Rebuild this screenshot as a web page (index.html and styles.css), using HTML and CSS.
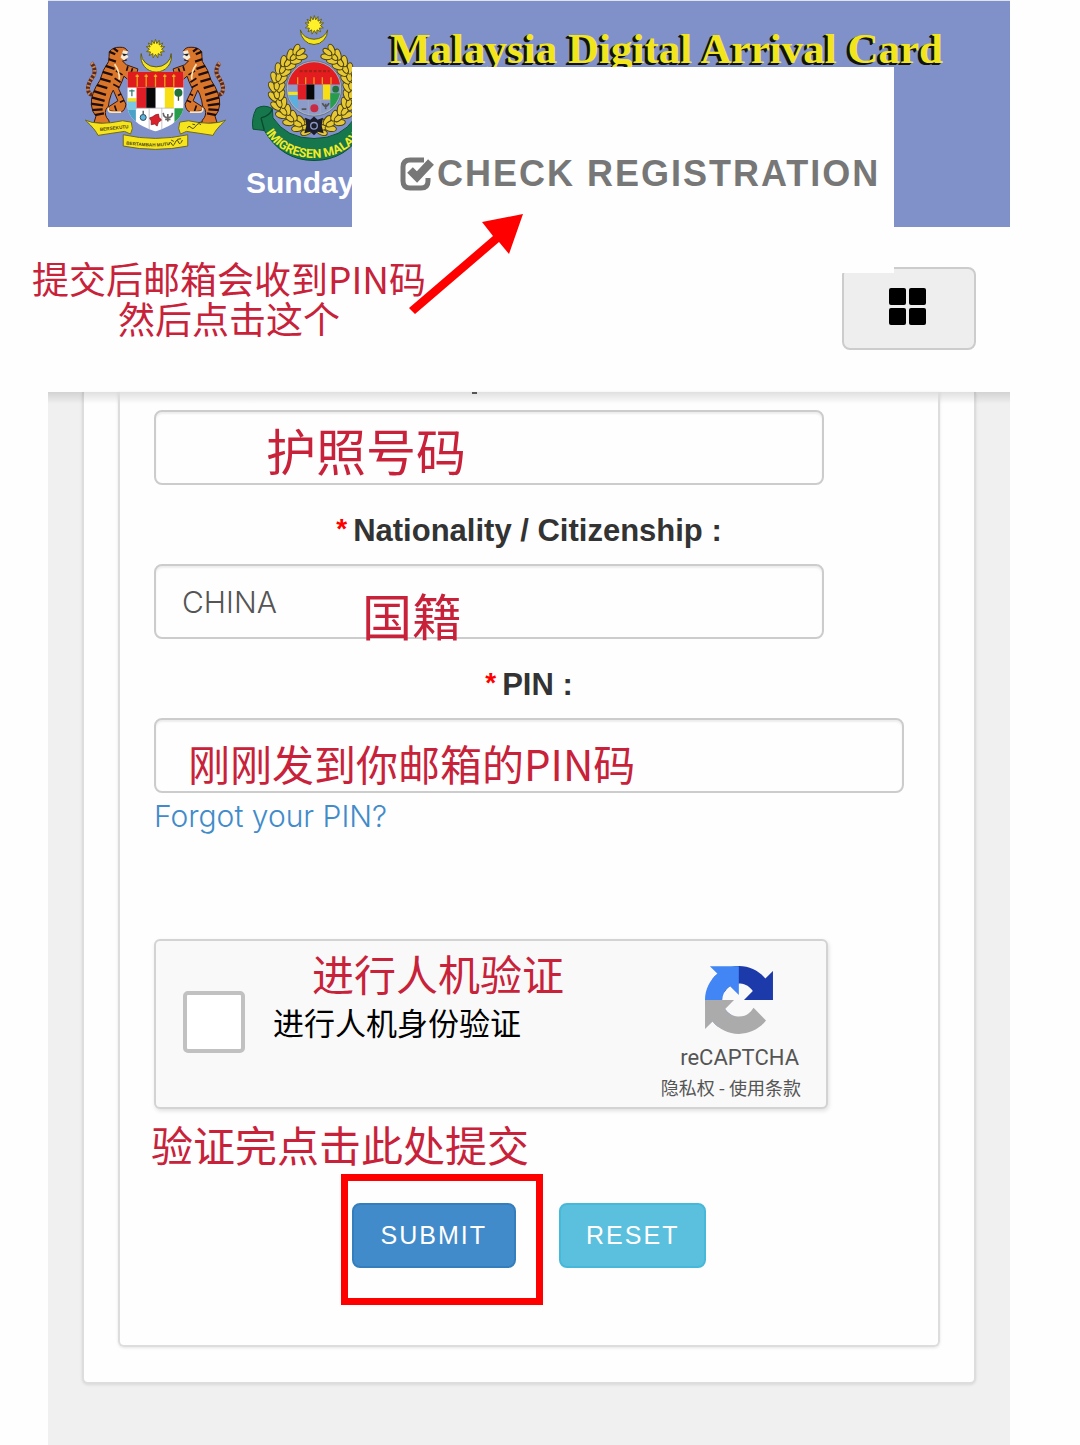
FILE: index.html
```html
<!DOCTYPE html>
<html lang="zh-CN">

<head>
    <meta charset="UTF-8">
    <meta name="viewport" content="width=device-width, initial-scale=1.0">
    <title>Malaysia Digital Arrival Card</title>
    <link rel="stylesheet" href="styles.css">
</head>

<body>
    <div class="page">
        <!-- Banner -->
        <header class="banner">
            <div class="banner-top">
                <svg class="coat-of-arms" viewBox="130 106 430 344" aria-label="Coat of arms">
                    <defs>
                        <path id="tiger-body" d="M262 152 Q256 138 238 139 Q218 138 206 152 Q206 166 204 182 Q186 206 178 238 Q150 278 152 312 Q154 334 166 346 L160 366 L208 370 L204 358 Q190 344 196 326 Q206 318 206 300 Q212 276 218 268 L232 300 L204 318 L206 330 L240 334 Q254 330 256 310 L234 264 Q246 240 250 226 L262 236 L264 214 L290 214 L292 204 L258 192 Q250 186 246 180 L258 178 L250 166 Z"/>
                        <clipPath id="tiger-clip"><use href="#tiger-body"/></clipPath>
                        <g id="tiger">
                            <path d="M152 186 Q166 202 160 222 Q140 250 142 266 Q144 284 158 280" fill="none" stroke="#5b2a1c" stroke-width="12"/>
                            <path d="M152 186 Q166 202 160 222 Q140 250 142 266 Q144 284 158 280" fill="none" stroke="#c98a5b" stroke-width="11" stroke-dasharray="5 7"/>
                            <use href="#tiger-body" fill="#d9762c" stroke="#3a1708" stroke-width="3"/>
                            <g clip-path="url(#tiger-clip)" fill="none" stroke="#1d0d07" stroke-width="7">
                                <path d="M200 150 L224 160 M214 138 L232 152 M196 172 L226 182 M186 192 L222 204 M176 210 L216 222 M168 230 L210 242 M160 250 L200 262 M150 268 L196 282 M146 288 L192 300 M146 308 L188 314 M150 328 L186 326 M158 344 L190 338"/>
                                <path d="M226 210 L246 222 M222 232 L240 244 M218 250 L236 260 M232 284 L248 276 M238 304 L256 296 M222 314 L228 332 M262 196 L258 210 M276 202 L272 214" stroke-width="5"/>
                            </g>
                            <path d="M248 148 L264 152 L258 160 L264 168 L250 178 L240 170 Z" fill="#f6ead8"/>
                            <path d="M244 158 L262 160 L250 166 Z" fill="#222"/>
                            <path d="M204 320 Q200 334 214 334 L242 334 M222 190 Q238 212 236 236" fill="none" stroke="#ffe3b5" stroke-width="5"/>
                        </g>
                        <polygon id="sun" points="0,-29 4,-16 11,-26 11,-12 22,-18 16,-6 28,-7 18,1 27,8 15,9 19,20 8,14 7,27 0,16 -7,27 -8,14 -19,20 -15,9 -27,8 -18,1 -28,-7 -16,-6 -22,-18 -11,-12 -11,-26 -4,-16"/>
                    </defs>
                    <use href="#tiger"/>
                    <use href="#tiger" transform="translate(690 0) scale(-1 1)"/>
                    <path d="M302 158 A46 46 0 1 0 392 158 A45 40 0 0 1 302 158 Z" fill="#f6e51d" stroke="#5c5a1a" stroke-width="3"/>
                    <use href="#sun" transform="translate(345 144)" fill="#fff02a" stroke="#6b6412" stroke-width="3"/>
                    <clipPath id="shield"><path d="M260 212 H430 V312 Q430 366 345 392 Q260 366 260 312 Z"/></clipPath>
                    <g clip-path="url(#shield)">
                        <rect x="260" y="212" width="170" height="182" fill="#fff"/>
                        <rect x="260" y="212" width="170" height="48" fill="#e01b1b"/>
                        <rect x="260" y="300" width="28" height="26" fill="#7cc7e6"/>
                        <rect x="260" y="292" width="28" height="10" fill="#f4e01c"/>
                        <path d="M274 266 V286 M266 270 H282" stroke="#397c74" stroke-width="4"/>
                        <rect x="288" y="260" width="29" height="62" fill="#df1d27"/>
                        <rect x="317" y="260" width="28" height="62" fill="#080808"/>
                        <rect x="373" y="260" width="27" height="62" fill="#f7df13"/>
                        <path d="M414 276 V300" stroke="#4d4c24" stroke-width="4"/>
                        <circle cx="414" cy="276" r="12" fill="#22713b"/>
                        <path d="M260 326 H286 V390 H260 Z" fill="#4ba2c7"/>
                        <path d="M402 322 H430 V390 H402 Z" fill="#279d4c"/>
                        <path d="M308 330 V340" stroke="#455" stroke-width="4"/>
                        <circle cx="308" cy="350" r="9" fill="#5fb3dc" stroke="#27495e" stroke-width="3"/>
                        <path d="M345 342 L354 340 L356 350 L364 358 L354 364 L350 376 L342 370 L332 372 L332 360 L326 352 L336 348 Z" fill="#d9222c" stroke="#7f1118" stroke-width="2"/>
                        <path d="M368 336 Q370 352 382 350 Q394 352 396 336 M382 340 V362 M374 356 H390" fill="none" stroke="#666" stroke-width="5"/>
                        <path d="M288 322 H400 M326 322 V392 M364 322 V392" stroke="#a9a9b0" stroke-width="2"/>
                        <path d="M290 220 V258 M317 220 V258 M345 220 V258 M373 220 V258 M400 220 V258" stroke="#e9a31c" stroke-width="4"/>
                        <path d="M285 226 h10 M312 226 h10 M340 226 h10 M368 226 h10 M395 226 h10" stroke="#f4c22a" stroke-width="4"/>
                    </g>
                    <g fill="#f6e51d" stroke="#6e681b" stroke-width="3">
                        <path d="M134 358 Q170 376 246 360 L272 364 Q280 384 270 400 L252 392 Q210 398 172 404 Q166 388 134 358 Z"/>
                        <path d="M556 358 Q520 376 444 360 L418 364 Q410 384 420 400 L438 392 Q480 398 518 404 Q524 388 556 358 Z"/>
                        <path d="M248 402 Q345 424 442 402 L442 436 Q345 456 248 436 Z"/>
                    </g>
                    <path id="motto" d="M256 431 Q330 442 384 434" fill="none"/>
                    <text class="motto"><textPath href="#motto">BERTAMBAH MUTU</textPath></text>
                    <text class="motto" x="178" y="391" transform="rotate(-6 178 391)">BERSEKUTU</text>
                    <path d="M384 432 q6 -12 10 -2 t10 -4 t10 -2 t12 -6 M392 418 l8 4 M410 416 l12 -2 M440 382 q6 -10 12 -2 t14 -4 t16 -4 M456 370 l8 2 M474 366 l14 -4" fill="none" stroke="#4d4510" stroke-width="3"/>
                </svg>
                <svg class="immigration-badge" viewBox="634 36 378 446" aria-label="Imigresen Malaysia">
                    <defs>
                        <g id="leaf">
                            <ellipse cx="-13" cy="0" rx="9" ry="17" transform="rotate(-32 -13 0)"/>
                            <ellipse cx="13" cy="0" rx="9" ry="17" transform="rotate(32 13 0)"/>
                            <ellipse cx="0" cy="-6" rx="8" ry="15"/>
                        </g>
                        <g id="wreath" fill="#e6c935" stroke="#493f0c" stroke-width="3">
                            <use href="#leaf" transform="translate(802 380) rotate(-78)"/>
                            <use href="#leaf" transform="translate(778 370) rotate(-66)"/>
                            <use href="#leaf" transform="translate(754 354) rotate(-52)"/>
                            <use href="#leaf" transform="translate(734 334) rotate(-38)"/>
                            <use href="#leaf" transform="translate(720 310) rotate(-22)"/>
                            <use href="#leaf" transform="translate(712 284) rotate(-10)"/>
                            <use href="#leaf" transform="translate(711 258) rotate(2)"/>
                            <use href="#leaf" transform="translate(716 232) rotate(14)"/>
                            <use href="#leaf" transform="translate(727 208) rotate(28)"/>
                            <use href="#leaf" transform="translate(742 188) rotate(38)"/>
                            <use href="#leaf" transform="translate(760 170) rotate(48)"/>
                            <use href="#leaf" transform="translate(778 156) rotate(54)"/>
                        </g>
                    </defs>
                    <path d="M782 86 A41 44 0 1 0 864 86 A42 36 0 0 1 782 86 Z" fill="#f6e51d" stroke="#5c5a1a" stroke-width="3"/>
                    <use href="#sun" transform="translate(824 72)" fill="#fff02a" stroke="#6b6412" stroke-width="3"/>
                    <path d="M650 322 Q672 308 698 322 L700 350 Q740 412 823 412 Q906 412 946 350 L948 322 Q974 308 996 322 L1006 384 L972 388 Q920 478 823 478 Q726 478 674 388 L640 384 Q634 352 650 322 Z" fill="#16764c" stroke="#0b5233" stroke-width="3"/>
                    <path d="M698 324 Q690 344 664 350 M664 350 L674 388" fill="none" stroke="#0a4a2e" stroke-width="4"/>
                    <use href="#wreath"/>
                    <use href="#wreath" transform="translate(1646 0) scale(-1 1)"/>
                    <clipPath id="badge"><circle cx="823" cy="262" r="79"/></clipPath>
                    <circle cx="823" cy="262" r="83" fill="#a9b4bd" stroke="#55606c" stroke-width="2"/>
                    <g clip-path="url(#badge)">
                        <rect x="740" y="180" width="166" height="166" fill="#8c9cca"/>
                        <rect x="740" y="180" width="166" height="70" fill="#e51c1f"/>
                        <path d="M780 210 H870" stroke="#a22316" stroke-width="7" stroke-dasharray="9 5"/>
                        <path d="M774 228 V250 M798 228 V250 M823 228 V250 M848 228 V250 M874 228 V250" stroke="#eb9b20" stroke-width="4"/>
                        <rect x="774" y="250" width="26" height="46" fill="#df1d27"/>
                        <rect x="800" y="250" width="24" height="46" fill="#080808"/>
                        <rect x="850" y="250" width="22" height="46" fill="#f7df13"/>
                        <rect x="740" y="272" width="34" height="10" fill="#f4e01c"/>
                        <rect x="740" y="282" width="34" height="60" fill="#57b0df"/>
                        <rect x="872" y="276" width="34" height="70" fill="#279d4c"/>
                        <circle cx="888" cy="264" r="10" fill="#22713b"/>
                        <circle cx="824" cy="321" r="12" fill="#c92b43"/>
                        <path d="M786 324 H800 M848 306 Q858 326 868 306 M858 308 V324" fill="none" stroke="#555" stroke-width="5"/>
                        <path d="M774 296 H872 M806 296 V346 M842 296 V346" stroke="#a9a9b0" stroke-width="2"/>
                    </g>
                    <path d="M796 350 L812 356 L823 346 L834 356 L850 350 L846 374 L852 396 L834 392 L823 402 L812 392 L794 396 L800 374 Z" fill="#1b1c2a"/>
                    <circle cx="823" cy="374" r="10" fill="none" stroke="#8b96c2" stroke-width="4"/>
                    <path id="ribbon" d="M678 394 Q728 470 823 470 Q920 470 974 386" fill="none"/>
                    <text class="ribbon-text"><textPath href="#ribbon">IMIGRESEN MALAYSIA</textPath></text>
                </svg>
                <h1>Malaysia Digital Arrival Card</h1>
            </div>
            <p class="date">Sunday</p>
        </header>

        <!-- Navigation -->
        <nav class="navbar">
            <button type="button" class="menu-button" aria-label="Menu">
                <svg viewBox="0 0 38 38">
                    <rect x="0" y="0" width="17" height="17" rx="2"/>
                    <rect x="20" y="0" width="17" height="17" rx="2"/>
                    <rect x="0" y="20" width="17" height="17" rx="2"/>
                    <rect x="20" y="20" width="17" height="17" rx="2"/>
                </svg>
            </button>
        </nav>

        <!-- Check registration box lies over the banner -->
        <div class="check-box">
            <a href="#">
                <svg viewBox="0 0 38 36">
                    <path d="M25 4 H11 Q4 4 4 11 V25 Q4 32 11 32 H22 Q29 32 29 25 V22" fill="none" stroke="#777" stroke-width="5"/>
                    <path d="M11 14 L18 21 L32 6" fill="none" stroke="#777" stroke-width="8"/>
                </svg>CHECK REGISTRATION</a>
        </div>
        <p class="note note-check">提交后邮箱会收到PIN码<br>然后点击这个</p>
        <svg class="arrow" viewBox="0 0 114 101">
            <polygon points="114,0 100,40 90,28 6,100 0,94 84,22 73,8"/>
        </svg>

        <!-- Registration form -->
        <main class="content">
            <div class="panel">
                <form class="form">
                    <div class="field">
                        <input type="text" class="control" aria-label="Passport">
                        <span class="note note-passport">护照号码</span>
                    </div>

                    <label for="nationality"><span class="required">*</span>Nationality / Citizenship :</label>
                    <div class="field">
                        <select id="nationality" class="control">
                            <option>CHINA</option>
                        </select>
                        <span class="note note-nationality">国籍</span>
                    </div>

                    <label for="pin"><span class="required">*</span>PIN :</label>
                    <div class="field">
                        <input type="text" id="pin" class="control control-full">
                        <span class="note note-pin">刚刚发到你邮箱的PIN码</span>
                    </div>
                    <a href="#" class="forgot">Forgot your PIN?</a>

                    <div class="captcha">
                        <input type="checkbox" id="robot">
                        <label for="robot">进行人机身份验证</label>
                        <div class="captcha-brand">
                            <svg viewBox="0 0 64 64">
                                <path d="M64 31.955l-.033-1.37V4.687l-7.16 7.16C50.948 4.674 42.033.093 32.05.093c-10.4 0-19.622 4.96-25.458 12.64l11.736 11.86a15.55 15.55 0 0 1 4.754-5.334c2.05-1.6 4.952-2.906 8.968-2.906.485 0 .86.057 1.135.163 4.976.393 9.288 3.14 11.828 7.124l-8.307 8.307L64 31.953" fill="#1c3aa9"/>
                                <path d="M31.862.094l-1.37.033H4.594l7.16 7.16C4.58 13.147 0 22.06 0 32.046c0 10.4 4.96 19.622 12.64 25.458L24.5 45.768a15.55 15.55 0 0 1-5.334-4.754c-1.6-2.05-2.906-4.952-2.906-8.968 0-.485.057-.86.163-1.135.393-4.976 3.14-9.288 7.124-11.828l8.307 8.307L31.86.095" fill="#4285f4"/>
                                <path d="M.001 32.045l.033 1.37v25.898l7.16-7.16c5.86 7.173 14.774 11.754 24.76 11.754 10.4 0 19.622-4.96 25.458-12.64l-11.736-11.86a15.55 15.55 0 0 1-4.754 5.334c-2.05 1.6-4.952 2.906-8.968 2.906-.485 0-.86-.057-1.135-.163-4.976-.393-9.288-3.14-11.828-7.124l8.307-8.307c-10.522.04-22.4.066-27.295-.005" fill="#ababab"/>
                            </svg>
                            <span class="captcha-name">reCAPTCHA</span>
                            <span class="captcha-links"><a href="#">隐私权</a> - <a href="#">使用条款</a></span>
                        </div>
                        <span class="note note-captcha">进行人机验证</span>
                    </div>

                    <p class="note-submit">验证完点击此处提交</p>

                    <div class="buttons">
                        <div class="highlight">
                            <button type="submit" class="btn btn-primary">SUBMIT</button>
                        </div>
                        <button type="reset" class="btn btn-info">RESET</button>
                    </div>
                </form>
            </div>
        </main>
    </div>
</body>

</html>
```

FILE: styles.css
```css
/* Base Styles */
* {
    box-sizing: border-box;
}

body {
    margin: 0;
    background-color: #fefefe;
    font-family: "Liberation Sans", "Noto Sans CJK SC", sans-serif;
    color: #333;
}

h1, p {
    margin: 0;
}

.page {
    position: relative;
    display: flex;
    flex-direction: column;
    min-height: 100vh;
    margin: 0 70px 0 48px;
}

/* Banner */
.banner {
    padding: 12px 0 23px 36px;
    border-top: 1px solid #dfe3f2;
    background-color: #8091ca;
}

.banner-top {
    display: flex;
    align-items: flex-start;
}

.banner svg {
    flex: none;
}

.coat-of-arms {
    width: 143px;
    height: 115px;
    margin: 23px 24px 0 0;
}

.immigration-badge {
    width: 126px;
    height: 149px;
    margin-right: 13px;
}

.motto {
    font: bold 14px "Liberation Sans", sans-serif;
    fill: #4d4510;
}

.ribbon-text {
    font: bold 37px Roboto, sans-serif;
    fill: #f3ec25;
}

.banner h1 {
    padding-top: 12px;
    font: bold 43px/48px "Liberation Serif", serif;
    color: #f3e51c;
    text-shadow: -2px 1px 0 #111, -3px 2px 0 #111;
    white-space: nowrap;
}

.date {
    padding-left: 162px;
    font-size: 30px;
    font-weight: bold;
    line-height: 42px;
    color: white;
}

/* Navigation */
.navbar {
    position: relative;
    display: flex;
    justify-content: flex-end;
    padding: 40px 34px 42px;
}

.navbar::after {
    content: '';
    position: absolute;
    top: 100%;
    left: 0;
    width: 100%;
    height: 12px;
    background: linear-gradient(rgba(0, 0, 0, 0.12), rgba(0, 0, 0, 0));
}

.menu-button {
    display: flex;
    align-items: center;
    justify-content: center;
    width: 134px;
    height: 83px;
    padding: 0 2px 4px 0;
    border: 2px solid #ccc;
    border-radius: 8px;
    background-color: #eee;
}

.menu-button svg {
    width: 38px;
    height: 38px;
}

/* Check registration */
.check-box {
    position: absolute;
    top: 67px;
    left: 304px;
    width: 542px;
    height: 206px;
    padding: 86px 0 0 47px;
    background-color: #fefefe;
}

.check-box a {
    display: flex;
    align-items: center;
    font-size: 36px;
    font-weight: bold;
    line-height: 42px;
    letter-spacing: 2px;
    color: #777;
    text-decoration: none;
    white-space: nowrap;
}

.check-box svg {
    flex: none;
    width: 38px;
    height: 36px;
}

.arrow {
    position: absolute;
    top: 214px;
    left: 361px;
    width: 114px;
    height: 101px;
    fill: #f00;
}

/* Red notes */
.note {
    position: absolute;
    font-family: "Noto Sans CJK SC", sans-serif;
    color: #c8223a;
    white-space: nowrap;
}

.note-check {
    top: 258px;
    left: -16px;
    font-size: 37px;
    line-height: 40px;
    text-align: center;
}

.note-passport {
    top: 9px;
    left: 112px;
    font-size: 50px;
    line-height: 60px;
}

.note-nationality {
    top: 20px;
    left: 208px;
    font-size: 50px;
    line-height: 60px;
}

.note-pin {
    top: 20px;
    left: 34px;
    font-size: 42px;
    line-height: 50px;
}

.note-captcha {
    top: 7px;
    left: 156px;
    font-size: 42px;
    line-height: 50px;
}

.note-submit {
    margin-left: -3px;
    padding-bottom: 4px;
    font-family: "Noto Sans CJK SC", sans-serif;
    font-size: 42px;
    line-height: 70px;
    color: #c8223a;
}

/* Form */
.content {
    flex: 1;
    padding: 0 34px 62px;
    background-color: #f0f0f0;
}

.panel {
    padding: 0 34px 35px;
    border: 2px solid #ddd;
    border-top: 0;
    border-radius: 0 0 6px 6px;
    background-color: #fefefe;
    box-shadow: 0 1px 3px rgba(0, 0, 0, 0.1);
}

.form {
    position: relative;
    padding: 18px 34px 77px;
    border: 2px solid #ddd;
    border-top: 0;
    border-radius: 0 0 6px 6px;
    box-shadow: 0 1px 3px rgba(0, 0, 0, 0.1);
}

/* Tail of the label scrolled under the navbar */
.form::before {
    content: '';
    position: absolute;
    top: 0;
    left: 43%;
    width: 5px;
    height: 2px;
    background-color: #555;
}

.form > label {
    display: block;
    padding: 27px 0 15px;
    font-size: 31px;
    font-weight: bold;
    line-height: 37px;
    text-align: center;
}

.required {
    margin-right: 6px;
    font-size: 28px;
    line-height: 20px;
    vertical-align: 3px;
    color: #f00;
}

.field {
    position: relative;
}

.control {
    display: block;
    width: calc(100% - 80px);
    height: 75px;
    padding: 0 26px;
    border: 2px solid #ccc;
    border-radius: 8px;
    background-color: #fefefe;
    box-shadow: inset 0 2px 2px rgba(0, 0, 0, 0.07);
    font-family: Inter, "Liberation Sans", sans-serif;
    font-size: 30px;
    font-weight: 300;
    color: #555;
    appearance: none;
}

.control-full {
    width: 100%;
}

.forgot {
    display: block;
    font-family: Inter, "Liberation Sans", sans-serif;
    font-size: 30px;
    font-weight: 300;
    line-height: 46px;
    color: #428bca;
    text-decoration: none;
}

/* Captcha */
.captcha {
    position: relative;
    display: flex;
    width: calc(100% - 76px);
    height: 170px;
    margin-top: 100px;
    padding: 25px 25px 0 27px;
    border: 2px solid #d3d3d3;
    border-radius: 6px;
    background-color: #f9f9f9;
    box-shadow: 1px 2px 4px rgba(0, 0, 0, 0.12);
}

.captcha input {
    flex: none;
    width: 62px;
    height: 62px;
    margin: 25px 28px 0 0;
    border: 4px solid #c1c1c1;
    border-radius: 5px;
    background-color: white;
    appearance: none;
}

.captcha label {
    flex: 1;
    margin-top: 34px;
    font-family: "Noto Sans CJK SC", sans-serif;
    font-size: 31px;
    line-height: 44px;
    color: black;
}

.captcha-brand {
    display: flex;
    flex-direction: column;
    align-items: flex-end;
    color: #555;
}

.captcha-brand svg {
    width: 68px;
    height: 68px;
    margin-right: 28px;
}

.captcha-name {
    padding-right: 2px;
    margin-top: 9px;
    font-family: Roboto, sans-serif;
    font-size: 22px;
    line-height: 30px;
}

.captcha-links {
    font-family: "Noto Sans CJK SC", sans-serif;
    font-size: 18px;
    line-height: 28px;
}

.captcha-links a {
    color: #555;
    text-decoration: none;
}

/* Buttons */
.buttons {
    display: flex;
    justify-content: center;
    gap: 43px;
    padding-top: 20px;
}

.highlight {
    position: relative;
}

.highlight::after {
    content: '';
    position: absolute;
    top: -29px;
    right: -27px;
    bottom: -37px;
    left: -11px;
    border: 7px solid #f00;
    pointer-events: none;
}

.btn {
    height: 65px;
    padding: 0 27px;
    border: 2px solid;
    border-radius: 8px;
    font-family: "Liberation Sans", sans-serif;
    font-size: 25px;
    letter-spacing: 2px;
    color: white;
}

.btn-primary {
    border-color: #357ebd;
    background-color: #428bca;
}

.btn-info {
    padding: 0 25px;
    border-color: #46b8da;
    background-color: #5bc0de;
}

@media (max-width: 768px) {
    .page {
        margin: 0;
    }

    .note-check {
        left: 0;
    }
}
```
